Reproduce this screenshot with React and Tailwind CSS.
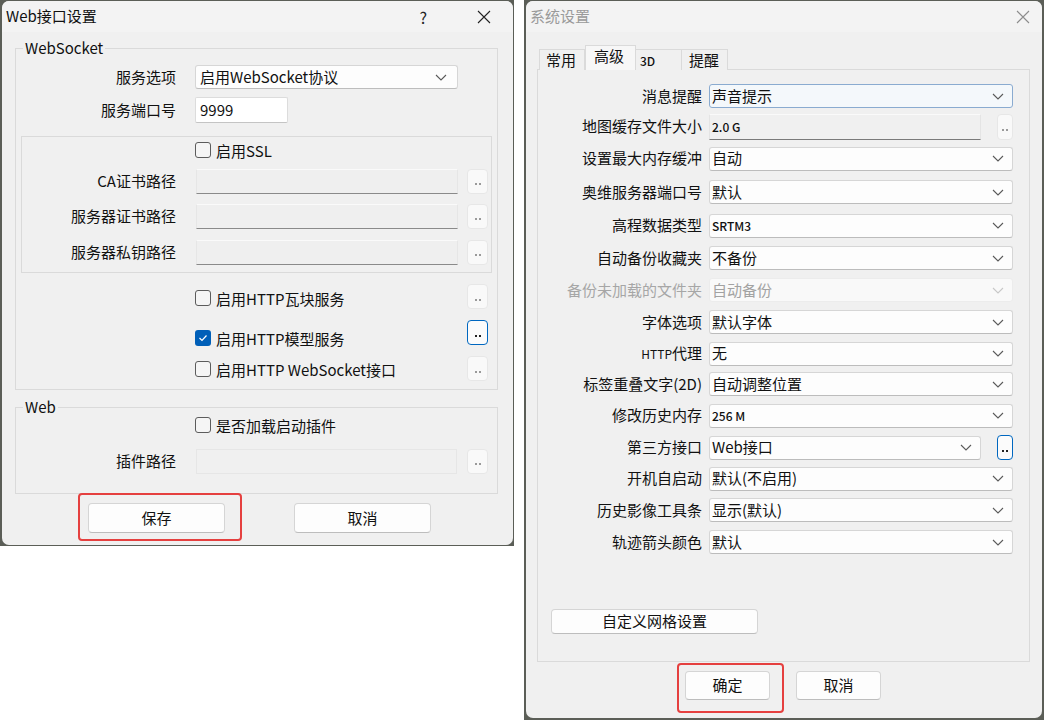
import React from 'react';

const FONT = "font-['Noto_Sans_CJK_SC','Noto_Sans',sans-serif]";

function Chevron({ disabled }) {
  return (
    <svg width="12" height="7" viewBox="0 0 12 7" className="shrink-0">
      <polyline points="1,1 6,6 11,1" fill="none" stroke={disabled ? '#c8c8c8' : '#5a5a5a'} strokeWidth="1.1" />
    </svg>
  );
}

function CloseIcon({ color }) {
  return (
    <svg width="14" height="14" viewBox="0 0 14 14">
      <path d="M1 1 L13 13 M13 1 L1 13" stroke={color} strokeWidth="1.1" fill="none" />
    </svg>
  );
}

function Checkbox({ checked, label }) {
  return (
    <div className="flex items-center gap-[5px]">
      {checked ? (
        <span className="w-4 h-4 rounded-[3px] bg-[#005fb8] flex items-center justify-center shrink-0">
          <svg width="10" height="8" viewBox="0 0 10 8">
            <polyline points="1.5,4 4,6.5 8.5,1.5" fill="none" stroke="white" strokeWidth="1.2" />
          </svg>
        </span>
      ) : (
        <span className="w-4 h-4 rounded-[3px] border border-[#5c5c5c] bg-[#f5f5f5] shrink-0" />
      )}
      <span className="text-[15px] leading-none text-[#111]">{label}</span>
    </div>
  );
}

function DotsButton({ focused, size = 'w-[21px] h-[25px]' }) {
  return (
    <div
      className={`${size} shrink-0 rounded-[4px] flex items-center justify-center pt-[6px] gap-[2px] ${
        focused ? 'border-[1.5px] border-[#0067c0] bg-[#fbfbfb]' : 'border border-[#e7e7e7] bg-[#f9f9f9]'
      }`}
    >
      <span className={`w-[2px] h-[2px] ${focused ? 'bg-[#222]' : 'bg-[#9a9a9a]'}`} />
      <span className={`w-[2px] h-[2px] ${focused ? 'bg-[#222]' : 'bg-[#9a9a9a]'}`} />
    </div>
  );
}

function PathInput({ width, dim }) {
  return (
    <div
      className={`${width} h-[25px] shrink-0 border border-[#e6e6e6] ${
        dim ? 'bg-[#f0f0f0] border-b-[#e6e6e6]' : 'bg-[#efefef] border-b-[#8a8a8a] border-t-[#fafafa]'
      }`}
    />
  );
}

function WinButton({ children, className }) {
  return (
    <div
      className={`${className} bg-[#fdfdfd] border border-[#d5d5d5] border-b-[#bdbdbd] rounded-[4px] flex items-center justify-center text-[15px] text-[#111]`}
    >
      {children}
    </div>
  );
}

function WebDialog() {
  return (
    <div className="w-[514px] h-[546px] shrink-0 bg-[#5b5e57] pl-[2px] pb-[1px] pt-[1px] pr-[1px]">
      <div className="h-full rounded-[7px] bg-[#f0f0f0] flex flex-col overflow-hidden">
        <div className="h-[31px] bg-[#f3f3f3] flex items-center pl-[4px] shrink-0">
          <span className="text-[15px] text-[#111]">Web接口设置</span>
          <span className="ml-auto mr-[50px] text-[16px] text-[#222]">?</span>
          <span className="mr-[22px] flex"><CloseIcon color="#222" /></span>
        </div>

        <div className="flex flex-col pl-[13px] pr-[15px]">
          {/* WebSocket group */}
          <div className="relative mt-[16px] h-[342px] border border-[#dadada] flex flex-col">
            <span className="absolute -top-[10px] left-[7px] px-[2px] bg-[#f0f0f0] text-[15px] leading-[18px] text-[#111]">WebSocket</span>

            <div className="mt-[16px] flex items-center h-[24px]">
              <span className="w-[160px] text-right text-[15px] text-[#111]">服务选项</span>
              <div className="ml-[19px] w-[263px] h-[24px] bg-[#fdfdfd] border border-[#d6d6d6] border-b-[#bdbdbd] rounded-[3px] flex items-center pl-[4px] pr-[10px]">
                <span className="text-[15px] text-[#111]">启用WebSocket协议</span>
                <span className="ml-auto flex"><Chevron /></span>
              </div>
            </div>

            <div className="mt-[8px] flex items-center h-[26px]">
              <span className="w-[160px] text-right text-[15px] text-[#111]">服务端口号</span>
              <div className="ml-[19px] w-[93px] h-[26px] bg-white border border-[#dcdcdc] border-b-[#c4c4c4] rounded-[2px] flex items-center pl-[4px]">
                <span className="text-[15px] text-[#111]">9999</span>
              </div>
            </div>

            <div className="mt-[13px] mx-[5px] h-[137px] border border-[#dadada] flex flex-col">
              <div className="mt-[5px] ml-[173px] h-[16px] flex items-center">
                <Checkbox label="启用SSL" />
              </div>
              {[
                { label: 'CA证书路径', mt: 'mt-[10px]' },
                { label: '服务器证书路径', mt: 'mt-[9px]' },
                { label: '服务器私钥路径', mt: 'mt-[10px]' },
              ].map((r) => (
                <div key={r.label} className={`${r.mt} flex items-center h-[26px]`}>
                  <span className="w-[154px] text-right text-[15px] text-[#111]">{r.label}</span>
                  <div className="ml-[20px]"><PathInput width="w-[262px]" /></div>
                  <div className="ml-[9px]"><DotsButton /></div>
                </div>
              ))}
            </div>

            {[
              { label: '启用HTTP瓦块服务', mt: 'mt-[11px]', pt: 'pt-[6px]' },
              { label: '启用HTTP模型服务', mt: 'mt-[11px]', pt: 'pt-[10px]', checked: true, focused: true },
              { label: '启用HTTP WebSocket接口', mt: 'mt-[11px]', pt: 'pt-[5px]' },
            ].map((r) => (
              <div key={r.label} className={`${r.mt} flex items-start h-[25px]`}>
                <div className={`ml-[179px] ${r.pt}`}>
                  <Checkbox label={r.label} checked={r.checked} />
                </div>
                <div className="ml-auto mr-[9px]"><DotsButton focused={r.focused} /></div>
              </div>
            ))}
          </div>

          {/* Web group */}
          <div className="relative mt-[17px] h-[87px] border border-[#dadada] flex flex-col">
            <span className="absolute -top-[10px] left-[7px] px-[2px] bg-[#f0f0f0] text-[15px] leading-[18px] text-[#111]">Web</span>
            <div className="mt-[9px] ml-[179px] h-[16px] flex items-center">
              <Checkbox label="是否加载启动插件" />
            </div>
            <div className="mt-[15px] flex items-center h-[26px]">
              <span className="w-[160px] text-right text-[15px] text-[#111]">插件路径</span>
              <div className="ml-[20px]"><PathInput width="w-[261px]" dim /></div>
              <div className="ml-[10px]"><DotsButton /></div>
            </div>
          </div>

          <div className="mt-[9px] flex ml-[73px] gap-[69px]">
            <div className="relative">
              <WinButton className="w-[137px] h-[30px]">保存</WinButton>
              <div className="absolute -left-[10px] -top-[10px] -right-[17px] -bottom-[8px] border-2 border-[#e5403f] rounded-[4px]" />
            </div>
            <WinButton className="w-[137px] h-[30px]">取消</WinButton>
          </div>
        </div>
      </div>
    </div>
  );
}

const rows = [
  { label: '消息提醒', value: '声音提示', h: 'h-[30px]', focus: true },
  { label: '地图缓存文件大小', value: '2.0 G', h: 'h-[31px]', kind: 'input', small: true },
  { label: '设置最大内存缓冲', value: '自动', h: 'h-[33px]' },
  { label: '奥维服务器端口号', value: '默认', h: 'h-[34px]' },
  { label: '高程数据类型', value: 'SRTM3', h: 'h-[33px]', small: true },
  { label: '自动备份收藏夹', value: '不备份', h: 'h-[32px]' },
  { label: '备份未加载的文件夹', value: '自动备份', h: 'h-[32px]', disabled: true },
  { label: '字体选项', value: '默认字体', h: 'h-[32px]' },
  { label: 'HTTP代理', value: '无', h: 'h-[31px]', http: true },
  { label: '标签重叠文字(2D)', value: '自动调整位置', h: 'h-[30px]' },
  { label: '修改历史内存', value: '256 M', h: 'h-[33px]', small: true },
  { label: '第三方接口', value: 'Web接口', h: 'h-[31px]', kind: 'selectBtn' },
  { label: '开机自启动', value: '默认(不启用)', h: 'h-[31px]' },
  { label: '历史影像工具条', value: '显示(默认)', h: 'h-[32px]' },
  { label: '轨迹箭头颜色', value: '默认', h: 'h-[32px]' },
];

function SelectBox({ value, small, disabled, focus, width = 'w-[304px]' }) {
  const box = disabled
    ? 'bg-[#f9f9f9] border-[#ececec]'
    : focus
    ? 'bg-[#f4f8fb] border-[#8aabd0]'
    : 'bg-[#fdfdfd] border-[#d6d6d6] border-b-[#bcbcbc]';
  return (
    <div className={`${width} h-[24px] border rounded-[3px] flex items-center pl-[2px] pr-[8px] ${box}`}>
      <span
        className={`${small ? 'text-[12px] font-medium' : 'text-[15px]'} ${disabled ? 'text-[#a2a2a2]' : 'text-[#111]'}`}
      >
        {value}
      </span>
      <span className="ml-auto flex"><Chevron disabled={disabled} /></span>
    </div>
  );
}

function SystemDialog() {
  return (
    <div className="w-[520px] h-[720px] shrink-0 bg-[#5b5e57] pl-[2px] pb-[2px] pt-[1px] pr-[2px]">
      <div className="h-full rounded-[7px] bg-[#f0f0f0] flex flex-col overflow-hidden">
        <div className="h-[31px] bg-[#f3f3f3] flex items-center pl-[4px] shrink-0">
          <span className="text-[15px] text-[#9a9a9a]">系统设置</span>
          <span className="ml-auto mr-[12px] flex"><CloseIcon color="#8c8c8c" /></span>
        </div>

        <div className="flex flex-col pl-[11px] pr-[12px]">
          <div className="mt-[14px] ml-[2px] flex items-end h-[24px] relative z-10 -mb-[1px]">
            <div className="w-[46px] h-[21px] border border-b-0 border-[#dadada] bg-[#f0f0f0] pl-[6px] text-[15px] leading-[20px] text-[#111]">常用</div>
            <div className="w-[51px] h-[25px] border border-b-0 border-[#dadada] bg-[#f7f7f7] pl-[8px] text-[15px] leading-[20px] text-[#111]">高级</div>
            <div className="w-[46px] h-[21px] border border-b-0 border-l-0 border-[#dadada] bg-[#f0f0f0] pl-[4px] text-[12px] leading-[22px] text-[#111] font-medium">3D</div>
            <div className="w-[46px] h-[21px] border border-b-0 border-l-0 border-[#dadada] bg-[#f0f0f0] pl-[7px] text-[15px] leading-[20px] text-[#111]">提醒</div>
          </div>

          <div className="h-[593px] border border-[#dadada] flex flex-col">
            <div className="mt-[11px] flex flex-col">
              {rows.map((r) => (
                <div key={r.label} className={`${r.h} flex items-center`}>
                  <span
                    className={`w-[164px] shrink-0 text-right text-[15px] ${r.disabled ? 'text-[#a6a6a6]' : 'text-[#111]'}`}
                  >
                    {r.http ? (
                      <>
                        <span className="text-[12px]">HTTP</span>代理
                      </>
                    ) : (
                      r.label
                    )}
                  </span>
                  <div className="ml-[7px] flex items-center">
                    {r.kind === 'input' ? (
                      <>
                        <div className="w-[272px] h-[26px] bg-[#f0f0f0] border border-[#e4e4e4] border-t-[#fafafa] border-b-[#7a7a7a] flex items-center pl-[2px]">
                          <span className="text-[12px] font-medium text-[#111]">{r.value}</span>
                        </div>
                        <div className="ml-[16px]"><DotsButton size="w-[16px] h-[26px]" /></div>
                      </>
                    ) : r.kind === 'selectBtn' ? (
                      <>
                        <SelectBox value={r.value} width="w-[272px]" />
                        <div className="ml-[16px]"><DotsButton size="w-[16px] h-[25px]" focused /></div>
                      </>
                    ) : (
                      <SelectBox value={r.value} small={r.small} disabled={r.disabled} focus={r.focus} />
                    )}
                  </div>
                </div>
              ))}
            </div>

            <div className="mt-[51px] ml-[13px]">
              <WinButton className="w-[207px] h-[25px]">自定义网格设置</WinButton>
            </div>
          </div>

          <div className="mt-[9px] ml-[148px] flex gap-[26px]">
            <div className="relative">
              <WinButton className="w-[85px] h-[29px]">确定</WinButton>
              <div className="absolute -left-[8px] -top-[8px] -right-[14px] -bottom-[13px] border-2 border-[#e5403f] rounded-[4px]" />
            </div>
            <WinButton className="w-[85px] h-[29px]">取消</WinButton>
          </div>
        </div>
      </div>
    </div>
  );
}

export default function App() {
  return (
    <div className={`${FONT} w-[1044px] h-[723px] bg-white flex items-start overflow-hidden`}>
      <WebDialog />
      <div className="w-[10px] shrink-0" />
      <SystemDialog />
    </div>
  );
}
